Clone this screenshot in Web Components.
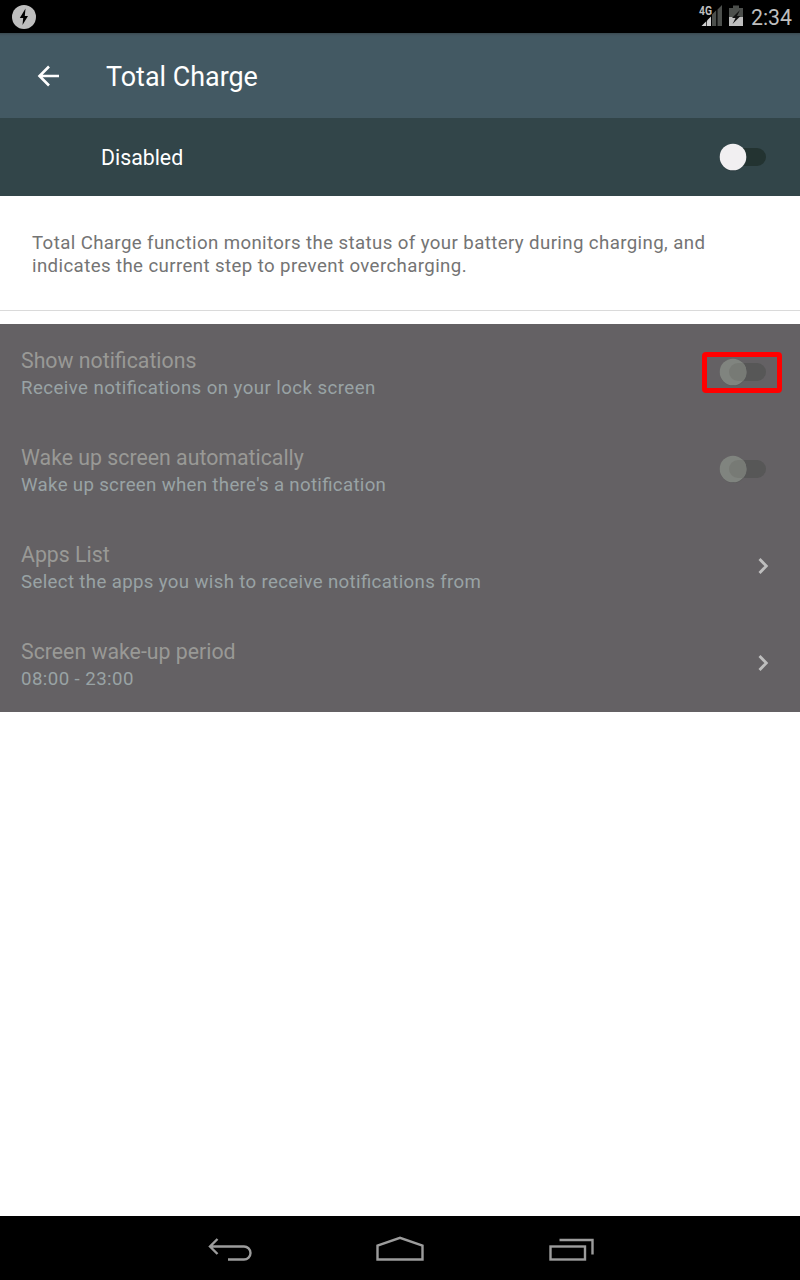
<!DOCTYPE html>
<html lang="en"><head><meta charset="utf-8"><title>Total Charge</title>
<style>html,body{margin:0;height:100%;background:#fff;font-family:Roboto,sans-serif}</style></head>
<body>
<charge-screen></charge-screen>
<script>
const define = (name, html) => customElements.define(name, class extends HTMLElement {
  constructor() {
    super();
    this.attachShadow({mode: 'open'}).innerHTML = html;
  }
});

define('status-bar', `<style>
:host{display:flex;align-items:center;height:33px;background:#000;color:#bebebe;box-sizing:border-box;padding:0 8px 0 11px}
.sp{flex:1}svg{display:block}
.time{font-size:21.3px;line-height:33px;margin-left:7px;padding-top:2px}
</style>
<svg width="26" height="33" viewBox="11 0 26 33"><circle cx="24" cy="17" r="12" fill="#bebebe"/><path d="M25.500 8.500 19.800 18h3.400l-.7 7 5.500-9h-3.200z" fill="#000"/></svg>
<span class="sp"></span>
<svg width="46" height="33" viewBox="698 0 46 33">
<path d="M701.500 26l4.800-4.800V26z" fill="#d0d0d0"/><path d="M707 20.500l4-4V26h-4z" fill="#d0d0d0"/><path d="M712 14.500l4.200-4.200V26H712zM717.500 9.500l4.500-4.500V26h-4.500z" fill="#4c4f4c"/>
<text x="699" y="15" font-family="Roboto" font-size="12.500" font-weight="700" textLength="13" lengthAdjust="spacingAndGlyphs" fill="#bebebe">4G</text>
<path d="M729 8h4V5.500h6V8h4v9h-14z" fill="#4c4f4c"/><path d="M729 17h14v9h-14z" fill="#bebebe"/><path d="M740 10l-8 8h3.500l-3 6 8-8H737z" fill="#111"/></svg>
<span class="time">2:34</span>`);

define('app-bar', `<style>
:host{display:flex;align-items:center;height:85px;background:linear-gradient(#38494f,#43555f 2px,#435963 4px);color:#fff;padding-left:37px;box-sizing:border-box}
svg{display:block;margin-right:46px}span{font-size:26.9px;line-height:32px;padding-top:2px;white-space:nowrap}
</style><svg width="23" height="24" viewBox="0 0 23 24"><path d="M22 12H3M12 2.500 2.500 12l9.500 9.500" fill="none" stroke="#fff" stroke-width="2.600"/></svg><span><slot></slot></span>`);

define('toggle-switch', `<style>
:host{display:block;width:48px;height:30px}svg{display:block}.dim{display:none}
:host([dim]) .dim{display:block}:host([dim]) .on{display:none}
</style>
<svg class="on" width="48" height="30" viewBox="0 0 48 30"><rect x="10" y="6" width="37" height="18" rx="9" fill="#233331"/><circle cx="14" cy="15.800" r="13.500" fill="#2b3b3f"/><circle cx="14" cy="15" r="13.300" fill="#f1eff1"/></svg>
<svg class="dim" width="48" height="30" viewBox="0 0 48 30"><rect x="10" y="6" width="37" height="18" rx="9" fill="#575757"/><circle cx="14.300" cy="15.500" r="13.500" fill="#5a5a5b"/><circle cx="14" cy="15" r="13.300" fill="#80847f"/><path d="M24 6a13.300 13.300 0 0 1 0 18h-5a9 9 0 0 1 0-18z" fill="#777a75"/></svg>`);

define('master-bar', `<style>
:host{display:flex;align-items:center;justify-content:space-between;height:78px;background:#324549;color:#fff;padding:0 33px 0 101px;box-sizing:border-box}
span{font-size:21.3px;line-height:26px;padding-top:1px}
</style><span><slot></slot></span><toggle-switch></toggle-switch>`);

define('info-text', `<style>
:host{display:block;height:115px;box-sizing:border-box;border-bottom:1px solid #dadada;padding:36px 32px 0;margin-bottom:13px;color:#747474;font-size:18.66px;line-height:23px;white-space:nowrap;letter-spacing:.39px}
</style><slot></slot>`);

define('setting-row', `<style>
:host{display:flex;align-items:flex-start;justify-content:space-between;height:97px;box-sizing:border-box;padding:0 33px 0 21px;position:relative}
.text{padding-top:23.5px}
.t{font-size:21.3px;line-height:26px;color:#999996;white-space:nowrap}
.s{font-size:18.66px;line-height:28px;color:#99a3a5;white-space:nowrap;letter-spacing:var(--track,.37px);font-feature-settings:"liga" 1}
toggle-switch{margin-top:33px}
.c,.mark{display:none}.c{margin:40px -2px 0 0}
:host([link]) .c{display:block}:host([link]) toggle-switch{display:none}
:host([marked]) .mark{display:block;position:absolute;left:702px;top:28px;width:80px;height:41px;box-sizing:border-box;border:5px solid #f00;border-radius:4px}
</style>
<div class="text"><div class="t"><slot name="title"></slot></div><div class="s"><slot></slot></div></div>
<toggle-switch dim></toggle-switch>
<svg class="c" width="11" height="16" viewBox="0 0 11 16"><path d="M1.500 1 8.300 8l-6.800 7" fill="none" stroke="#bebebe" stroke-width="2.800"/></svg>
<div class="mark"></div>`);

define('settings-list', `<style>:host{display:block;background:#646164}</style><slot></slot>`);

define('nav-bar', `<style>
:host{display:flex;justify-content:center;align-items:center;gap:124px;height:64px;background:#000;box-sizing:border-box;padding-top:2px}svg{display:block}
path,rect{fill:none;stroke:#9c9c9c;stroke-width:2.400}
</style>
<svg width="45" height="30" viewBox="207 1234 45 30"><path d="M210 1246.500h34a6.500 6.500 0 0 1 0 13h-16M217.500 1239l-7.500 7.500 7.500 7.500"/></svg>
<svg width="48" height="30" viewBox="376 1234 48 30"><path d="M377.500 1259.500v-14l22.500-7.700 22.500 7.700v14z"/></svg>
<svg width="46" height="30" viewBox="548 1234 46 30"><rect x="550.500" y="1246.500" width="34.500" height="13"/><path d="M559.500 1240h33v14.500"/></svg>`);

define('charge-screen', `<style>
:host{display:flex;flex-direction:column;height:1280px;width:800px;background:#fff}.grow{flex:1}
</style>
<status-bar></status-bar><app-bar>Total Charge</app-bar><master-bar>Disabled</master-bar>
<info-text>Total Charge function monitors the status of your battery during charging, and<br>indicates the current step to prevent overcharging.</info-text>
<settings-list>
<setting-row marked style="--track:.43px"><span slot="title">Show notifications</span>Receive notifications on your lock screen</setting-row>
<setting-row style="--track:.32px"><span slot="title">Wake up screen automatically</span>Wake up screen when there's a notification</setting-row>
<setting-row link style="--track:.35px"><span slot="title">Apps List</span>Select the apps you wish to receive notifications from</setting-row>
<setting-row link style="--track:.42px"><span slot="title">Screen wake-up period</span>08:00 - 23:00</setting-row>
</settings-list>
<div class="grow"></div><nav-bar></nav-bar>`);
</script>
</body></html>
